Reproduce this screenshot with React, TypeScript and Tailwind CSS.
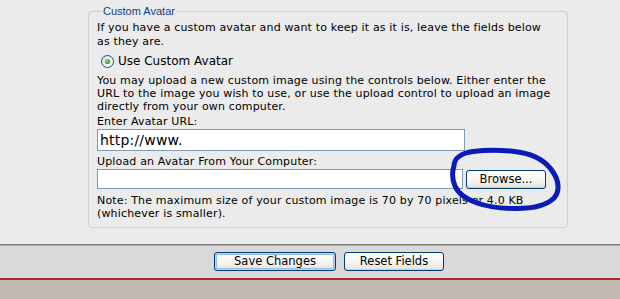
import React from "react";

function Radio() {
  return (
    <svg width="13" height="13" viewBox="0 0 13 13" className="block">
      <defs>
        <linearGradient id="rbg" x1="0" y1="0" x2="1" y2="1">
          <stop offset="0" stopColor="#dcdcd7" />
          <stop offset="1" stopColor="#ffffff" />
        </linearGradient>
        <radialGradient id="dot" cx="0.4" cy="0.4" r="0.6">
          <stop offset="0" stopColor="#8fe08f" />
          <stop offset="1" stopColor="#21a121" />
        </radialGradient>
      </defs>
      <circle cx="6.5" cy="6.5" r="6" fill="url(#rbg)" stroke="#1c5180" strokeWidth="1" />
      <circle cx="6.5" cy="6.5" r="2.6" fill="url(#dot)" />
    </svg>
  );
}

function XPButton({ children, focused, className }: { children: React.ReactNode; focused?: boolean; className?: string }) {
  return (
    <button
      className={
        "flex items-center justify-center rounded-[3px] border border-[#003c74] bg-[linear-gradient(#ffffff,#f4f4f0_60%,#e3e2d9)] text-[11.5px] leading-none text-black " +
        (focused ? "shadow-[inset_0_0_0_1px_#bcd3f5,inset_0_0_0_2px_#98b8ea] " : "shadow-[inset_0_-1px_0_#d6d0c5] ") +
        (className || "")
      }
    >
      {children}
    </button>
  );
}

export default function App() {
  return (
    <div className="relative h-[299px] w-[620px] overflow-hidden bg-[#ebebeb] font-['DejaVu_Sans',sans-serif] text-black">
      <div className="h-[244px] pt-[5px]">
        <fieldset className="ml-[88px] w-[480px] rounded-[4px] border border-[#d0d0bf] px-[8px] pt-[3px] pb-[7px]">
          <legend className="ml-[5px] px-[1px] font-['Liberation_Sans',sans-serif] text-[11px] leading-[13px] text-[#163a87]">
            Custom Avatar
          </legend>
          <p className="whitespace-nowrap text-[11px] leading-[13.5px] tracking-[0.16px]">
            If you have a custom avatar and want to keep it as it is, leave the fields below
            <br />
            as they are.
          </p>
          <div className="mt-[7px] flex h-[13px] items-center">
            <div className="ml-[4px]">
              <Radio />
            </div>
            <span className="ml-[4px] text-[12px] leading-[13px]">Use Custom Avatar</span>
          </div>
          <p className="mt-[6px] whitespace-nowrap text-[11px] leading-[13px] tracking-[0.16px]">
            You may upload a new custom image using the controls below. Either enter the
            <br />
            URL to the image you wish to use, or use the upload control to upload an image
            <br />
            directly from your own computer.
          </p>
          <div className="mt-[2px] text-[11px] leading-[13px] tracking-[0.16px]">Enter Avatar URL:</div>
          <div className="mt-[1px] flex h-[22px] w-[368px] items-center border border-[#7f9db9] bg-white pl-[2px] text-[14px] tracking-[0.2px]">
            http://www.
          </div>
          <div className="mt-[4px] text-[11px] leading-[13px] tracking-[0.16px]">Upload an Avatar From Your Computer:</div>
          <div className="mt-[1px] flex items-start">
            <div className="h-[20px] w-[366px] border border-[#7f9db9] bg-white" />
            <XPButton className="ml-[3px] mt-[1px] h-[19px] w-[80px]">Browse...</XPButton>
          </div>
          <p className="mt-[5px] whitespace-nowrap text-[11px] leading-[13px] tracking-[0.16px]">
            Note: The maximum size of your custom image is 70 by 70 pixels or 4.0 KB
            <br />
            (whichever is smaller).
          </p>
        </fieldset>
      </div>
      <div className="h-[1px] bg-[#86867a]" />
      <div className="h-[1px] bg-[#a9a99d]" />
      <div className="flex h-[32px] items-start gap-[8px] bg-[#d9d9d9] pl-[214px] pt-[6px]">
        <XPButton focused className="h-[19px] w-[122px]">Save Changes</XPButton>
        <XPButton className="h-[19px] w-[100px]">Reset Fields</XPButton>
      </div>
      <div className="h-[2px] bg-[#b02a2a]" />
      <div className="h-[19px] bg-[#c3bab4]" />
      <svg className="pointer-events-none absolute left-0 top-0" width="620" height="299" viewBox="0 0 620 299">
        <path
          d="M454,166 C454,158 462,153 473,151.5 C488,149.5 506,150 521,152.5 C536,155 547,163 553,172 C559,181 560,191 554,198 C547,205 532,208.5 516,208.5 C502,208.5 488,207 477,203 C466,199 458,193 455,186 C452,179 452,172 454,166 Z"
          fill="none"
          stroke="#0a1cb8"
          strokeWidth="5"
          strokeLinecap="round"
          strokeLinejoin="round"
        />
      </svg>
    </div>
  );
}
